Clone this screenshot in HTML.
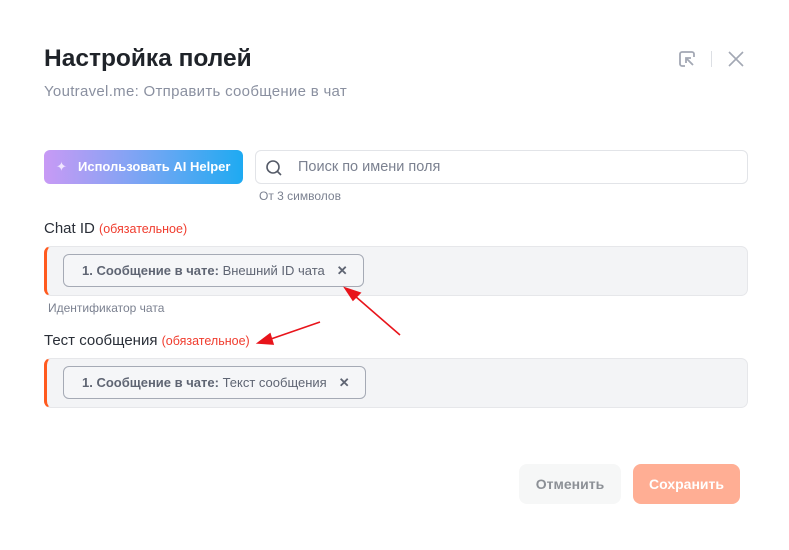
<!DOCTYPE html>
<html><head><meta charset="utf-8"><style>
*{box-sizing:border-box;margin:0;padding:0}
body{width:789px;height:550px;background:#fff;font-family:"Liberation Sans",sans-serif;position:relative;overflow:hidden}
.a{position:absolute}
h1{position:absolute;left:44px;top:45px;font-size:24.5px;font-weight:700;color:#1f2329;letter-spacing:0}
.sub{left:44px;top:83px;font-size:15px;color:#8a90a0;letter-spacing:0.3px}
.ai{left:44px;top:150px;width:199px;height:34px;border-radius:6px;background:linear-gradient(90deg,#c89af5,#67a7f3 60%,#1eaaf2);color:#fff;font-size:13px;font-weight:700;line-height:34px;padding-left:34px}
.search{left:255px;top:150px;width:493px;height:34px;border:1px solid #e2e4e8;border-radius:6px;font-size:14.5px;color:#7b8190;line-height:32px;padding-left:42px}
.hint{font-size:12px;color:#7b8190}
.lbl{left:44px;font-size:15px;color:#2a2f38}
.lbl span{color:#f03c2e;font-size:12.5px}
.field{left:44px;width:704px;height:50px;background:#f3f4f6;border:1px solid #e6e7ea;border-left:3px solid #ff5a1f;border-radius:7px}
.chip{position:absolute;left:16px;top:7px;height:33px;border:1px solid #a5aab5;border-radius:6px;background:#f5f6f8;font-size:13px;color:#5f6573;line-height:31px;padding:0 15px 0 18px;white-space:nowrap}
.chip b{color:#5f6573}
.x{margin-left:12px;font-size:13px;font-weight:700;color:#5f6573}
.btn{top:464px;height:40px;border-radius:8px;font-size:14px;font-weight:700;line-height:40px;text-align:center}
</style></head><body>
<h1>Настройка полей</h1>
<div class="a sub">Youtravel.me: Отправить сообщение в чат</div>
<svg class="a" style="left:677px;top:49px" width="20" height="20" viewBox="0 0 20 20" fill="none" stroke="#a3a8b4" stroke-width="1.8"><path d="M8 17H5a2 2 0 0 1-2-2V5a2 2 0 0 1 2-2h10a2 2 0 0 1 2 2v3"/><path d="M16 16L9 9M9 14V9h5"/></svg>
<div class="a" style="left:711px;top:51px;width:1px;height:16px;background:#dcdfe4"></div>
<svg class="a" style="left:727px;top:50px" width="18" height="18" viewBox="0 0 18 18" stroke="#a3a8b4" stroke-width="1.6"><path d="M2 2L16 16M16 2L2 16"/></svg>
<div class="a ai"><span style="position:absolute;left:12px;top:0;font-weight:400;color:#f0e6ff">✦</span>Использовать AI Helper</div>
<div class="a search"><svg style="position:absolute;left:9px;top:8px" width="18" height="18" viewBox="0 0 18 18" fill="none" stroke="#555b68" stroke-width="1.6"><circle cx="8" cy="8" r="6"/><path d="M12.5 12.5L16 16"/></svg>Поиск по имени поля</div>
<div class="a hint" style="left:259px;top:189px">От 3 символов</div>
<div class="a lbl" style="top:220px">Chat ID <span>(обязательное)</span></div>
<div class="a field" style="top:246px"><div class="chip"><b>1. Сообщение в чате:</b> Внешний ID чата<span class="x">✕</span></div></div>
<div class="a hint" style="left:48px;top:301px">Идентификатор чата</div>
<div class="a lbl" style="top:332px">Тест сообщения <span>(обязательное)</span></div>
<div class="a field" style="top:358px"><div class="chip"><b>1. Сообщение в чате:</b> Текст сообщения<span class="x">✕</span></div></div>
<svg class="a" style="left:0;top:0" width="789" height="550"><g stroke="#e8141b" stroke-width="1.6" fill="#e8141b"><path d="M400 335L355 296"/><path d="M345 288L360 293L353 300Z"/><path d="M320 322L268 340"/><path d="M258 343L270 334L273 344Z"/></g></svg>
<div class="a btn" style="left:519px;width:102px;background:#f6f7f7;color:#8c9096">Отменить</div>
<div class="a btn" style="left:633px;width:107px;background:#ffae94;color:#fff">Сохранить</div>
</body></html>
